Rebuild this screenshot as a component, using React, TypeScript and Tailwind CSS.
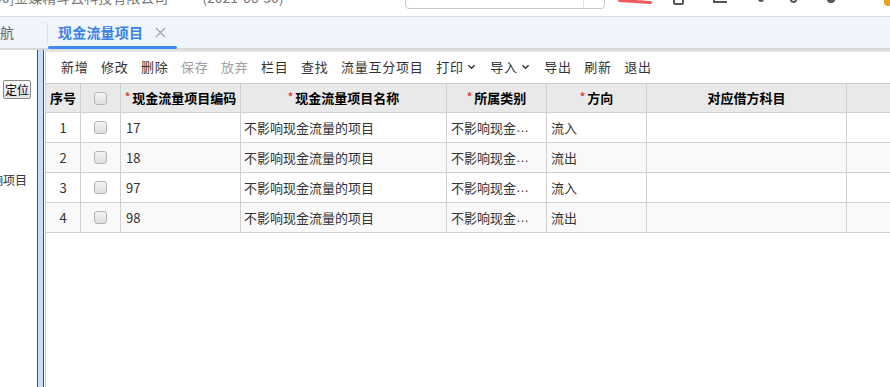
import React from 'react';

const FONT = '"Microsoft YaHei", "Noto Sans CJK SC", "Liberation Sans", sans-serif';

const tools: { label: string; disabled?: boolean; menu?: boolean }[] = [
  { label: '新增' },
  { label: '修改' },
  { label: '删除' },
  { label: '保存', disabled: true },
  { label: '放弃', disabled: true },
  { label: '栏目' },
  { label: '查找' },
  { label: '流量互分项目' },
  { label: '打印', menu: true },
  { label: '导入', menu: true },
  { label: '导出' },
  { label: '刷新' },
  { label: '退出' },
];

const rows = [
  { no: 1, code: '17', name: '不影响现金流量的项目', kind: '不影响现金', dir: '流入' },
  { no: 2, code: '18', name: '不影响现金流量的项目', kind: '不影响现金', dir: '流出' },
  { no: 3, code: '97', name: '不影响现金流量的项目', kind: '不影响现金', dir: '流入' },
  { no: 4, code: '98', name: '不影响现金流量的项目', kind: '不影响现金', dir: '流出' },
];

function Chevron() {
  return (
    <svg width="9" height="9" viewBox="0 0 10 10" className="ml-[3px] mr-[2px]">
      <path d="M1.5 3.5 L5 7 L8.5 3.5" fill="none" stroke="#333" strokeWidth="1.6" />
    </svg>
  );
}

function Box() {
  return <span className="inline-block w-[13px] h-[13px] rounded-[3px] border border-[#b4b4b4] bg-gradient-to-b from-[#f4f4f4] to-[#dedede]" />;
}

function Req({ children }: { children: React.ReactNode }) {
  return (
    <span>
      <span className="text-[#e0413a] text-[11px] mr-[2px] relative -top-[2px]">*</span>
      {children}
    </span>
  );
}

export default function App() {
  const cell = 'border-r border-[#d0d0d0] h-full flex items-center';
  return (
    <div className="w-[890px] h-[387px] overflow-hidden bg-white flex flex-col text-[#333]" style={{ fontFamily: FONT }}>
      {/* Top header, mostly scrolled off */}
      <div className="h-[17px] shrink-0 border-b border-[#dcdcdc] relative overflow-hidden">
        <div className="absolute left-0 -top-[13px] flex items-center text-[14px] text-[#777] whitespace-nowrap">
          <span className="-ml-[6px]">00]金蝶精斗云科技有限公司</span>
          <span className="ml-[34px]">(2021-06-30)</span>
        </div>
        <div className="absolute left-[405px] -top-[12px] w-[200px] h-[21px] border border-[#c8c8c8] rounded-[4px]">
          <span className="absolute right-[20px] top-0 h-full border-l border-[#e4e4e4]" />
        </div>
        <span className="absolute left-[618px] top-0 w-[34px] h-[3px] bg-[#f25a5a] rounded-full rotate-[4deg]" />
        <span className="absolute left-[673px] -top-[6px] w-[11px] h-[11px] border-2 border-[#555] rounded-[2px]" />
        <span className="absolute left-[713px] -top-[4px] w-[14px] h-[7px] border-b-2 border-l-2 border-[#555]" />
        <span className="absolute left-[758px] -top-[4px] w-[6px] h-[6px] bg-[#555] rounded-full" />
        <span className="absolute left-[790px] -top-[4px] w-[7px] h-[7px] border-2 border-[#555] rounded-full" />
        <span className="absolute left-[827px] -top-[4px] w-[8px] h-[7px] bg-[#555] rounded-full" />
        <span className="absolute left-[884px] -top-[4px] w-[8px] h-[10px] bg-[#f0a020] rounded-full" />
      </div>

      {/* Tab bar */}
      <div className="h-[33px] shrink-0 bg-[#f0f5fd] border-b-2 border-[#d8d8d8] flex items-stretch">
        <div className="w-[47px] flex items-center text-[14px] text-[#666]">航</div>
        <div className="flex items-center">
          <span className="w-px h-[20px] bg-[#d9dde4]" />
        </div>
        <div className="relative w-[129px] flex items-center pl-[10px]">
          <span className="text-[14px] font-bold text-[#3a82e6] tracking-[0.2px]">现金流量项目</span>
          <svg width="11" height="11" viewBox="0 0 11 11" className="ml-[12px]">
            <path d="M1 1 L10 10 M10 1 L1 10" stroke="#a8a8a8" strokeWidth="1.4" />
          </svg>
          <span className="absolute left-0 right-0 -bottom-[1px] h-[3px] bg-[#3d8bf2] rounded-full" />
        </div>
      </div>

      {/* Body */}
      <div className="flex-1 flex min-h-0">
        {/* Left nav panel */}
        <div className="w-[37px] shrink-0 flex flex-col overflow-hidden">
          <div className="h-[30px] shrink-0" />
          <div className="flex justify-end pr-[6px]">
            <span className="h-[19px] px-[1px] border border-[#8a8a8a] rounded-[2px] bg-gradient-to-b from-[#fafafa] to-[#e2e2e2] text-[12px] leading-[17px] text-black whitespace-nowrap">定位</span>
          </div>
          <div className="mt-[72px] flex justify-end pr-[10px] text-[12px] text-[#333] whitespace-nowrap">
            <span className="shrink-0">响项目</span>
          </div>
        </div>

        {/* Splitter */}
        <div className="w-[7px] shrink-0 bg-[#c8ddf6] border-x-[1.5px] border-[#2b4f9e]" />
        <div className="w-px shrink-0" />

        {/* Main */}
        <div className="flex-1 flex flex-col border-l border-[#cfcfcf] border-t-2 border-t-[#e4e4e4] min-w-0">
          {/* Toolbar */}
          <div className="h-[31px] shrink-0 flex items-center pb-[2px] pl-[15px] gap-[12.5px] text-[13px] tracking-[0.75px]">
            {tools.map(t => (
              <span key={t.label} className={`flex items-center ${t.disabled ? 'text-[#a0a0a0]' : 'text-[#333]'}`}>
                {t.label}
                {t.menu && <Chevron />}
              </span>
            ))}
          </div>

          {/* Grid */}
          <div className="text-[13px]">
            <div className="flex h-[30px] bg-[#e9e9e9] border-y border-[#d0d0d0] font-bold text-black">
              <div className={`${cell} w-[35px] justify-center`}>序号</div>
              <div className={`${cell} w-[40px] justify-center`}><Box /></div>
              <div className={`${cell} w-[120px] justify-center`}><Req>现金流量项目编码</Req></div>
              <div className={`${cell} w-[206px] justify-center`}><Req>现金流量项目名称</Req></div>
              <div className={`${cell} w-[100px] justify-center`}><Req>所属类别</Req></div>
              <div className={`${cell} w-[100px] justify-center`}><Req>方向</Req></div>
              <div className={`${cell} w-[200px] justify-center`}>对应借方科目</div>
              <div className="flex-1" />
            </div>
            {rows.map((r, i) => (
              <div key={r.no} className={`flex h-[30px] border-b border-[#d0d0d0] ${i % 2 ? 'bg-[#f9f9f9]' : 'bg-white'}`}>
                <div className={`${cell} w-[35px] justify-center`}>{r.no}</div>
                <div className={`${cell} w-[40px] justify-center`}><Box /></div>
                <div className={`${cell} w-[120px] pl-[5px]`}>{r.code}</div>
                <div className={`${cell} w-[206px] pl-[3px]`}>{r.name}</div>
                <div className={`${cell} w-[100px] pl-[4px]`}>
                  {r.kind}
                  <span className="font-['Liberation_Sans',sans-serif]">…</span>
                </div>
                <div className={`${cell} w-[100px] pl-[4px]`}>{r.dir}</div>
                <div className={`${cell} w-[200px]`} />
                <div className="flex-1" />
              </div>
            ))}
          </div>
        </div>
      </div>
    </div>
  );
}
